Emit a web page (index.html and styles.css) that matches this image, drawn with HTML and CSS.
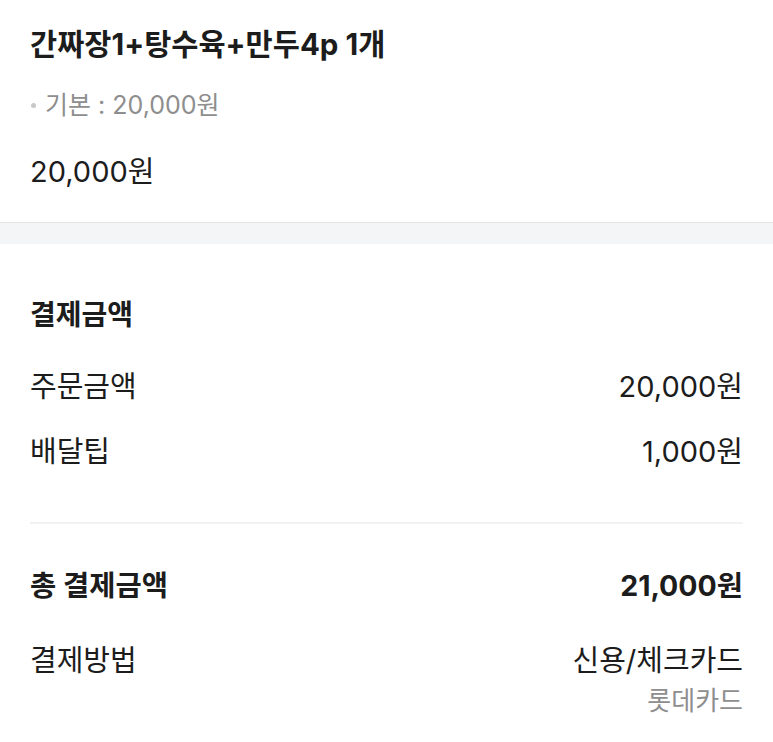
FILE: index.html
```html
<!DOCTYPE html>
<html lang="ko">
<head>
<meta charset="utf-8">
<link rel="stylesheet" href="styles.css">
</head>
<body>
<section class="menu">
  <h1 class="menu-title">간짜장1+탕수육+만두4p 1개</h1>
  <p class="menu-option"><span class="dot"></span>기본 : 20,000원</p>
  <p class="menu-price">20,000원</p>
</section>
<div class="band"></div>
<section class="pay">
  <h2 class="pay-title">결제금액</h2>
  <div class="row row-first"><span>주문금액</span><span>20,000원</span></div>
  <div class="row row-tip"><span>배달팁</span><span>1,000원</span></div>
  <hr class="divider">
  <div class="row row-total"><span>총 결제금액</span><span>21,000원</span></div>
  <div class="row row-method"><span>결제방법</span><span class="method"><span>신용/체크카드</span><span class="card">롯데카드</span></span></div>
</section>
</body>
</html>
```
FILE: styles.css
```css
* { box-sizing: border-box; }
html, body { margin: 0; padding: 0; background: #fff; }
body {
  font-family: Inter, "Noto Sans CJK KR", sans-serif;
  color: #1c1c1c;
  width: 773px;
}
.menu { padding: 24px 30px 30px; border-bottom: 1px solid #e4e4e6; }
.menu-title { margin: 0; font-size: 29.5px; line-height: 40px; font-weight: 700; }
.menu-option { margin: 23px 0 0; font-size: 25px; line-height: 36px; color: #8e8e8e; display: flex; align-items: center; }
.dot { width: 5px; height: 5px; border-radius: 50%; background: #c8c8c8; margin: 0 9px 0 1px; }
.menu-price { margin: 29px 0 0; font-size: 29px; line-height: 40px; }
.band { height: 21px; background: #f4f5f7; }
.pay { padding: 51px 30px 40px; }
.pay-title { margin: 0; font-size: 28px; line-height: 40px; font-weight: 700; }
.row { display: flex; justify-content: space-between; align-items: flex-start; font-size: 29px; line-height: 40px; }
.row-first { margin-top: 32px; }
.row-tip { margin-top: 25px; }
.divider { margin: 50px 0 0; border: 0; height: 2px; background: #f2f2f3; }
.row-total { margin-top: 42px; font-weight: 700; font-size: 28.5px; }
.row-method { margin-top: 35px; }
.method { display: flex; flex-direction: column; align-items: flex-end; }
.card { font-size: 26px; line-height: 36px; color: #8e8e8e; margin-top: 2px; }
```
